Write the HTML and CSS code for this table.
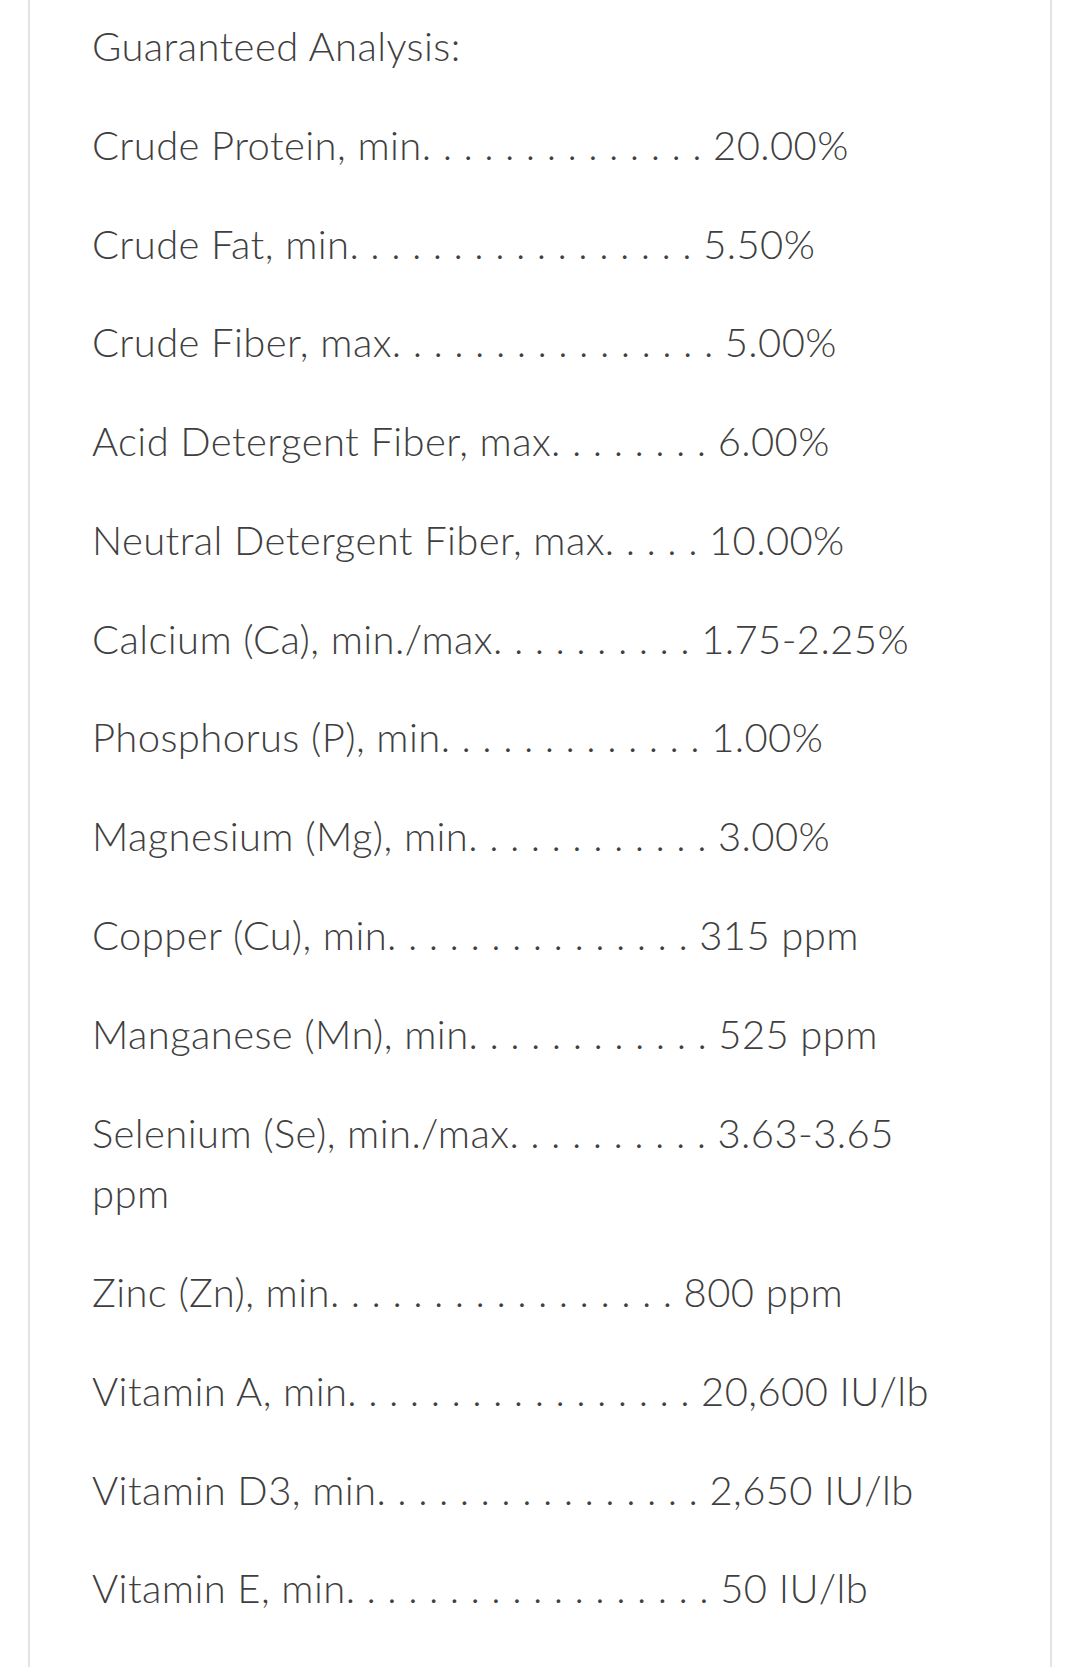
FILE: index.html
```html
<!DOCTYPE html>
<html lang="en">
<head>
<meta charset="utf-8">
<title>Guaranteed Analysis</title>
<link rel="stylesheet" href="styles.css">
</head>
<body>
<main class="card">
  <h1 class="row">Guaranteed Analysis:</h1>
  <p class="row"><span class="label">Crude Protein, min.</span><span class="dots"> . . . . . . . . . . . . . </span><span class="value">20.00%</span></p>
  <p class="row"><span class="label">Crude Fat, min.</span><span class="dots"> . . . . . . . . . . . . . . . . </span><span class="value">5.50%</span></p>
  <p class="row"><span class="label">Crude Fiber, max.</span><span class="dots"> . . . . . . . . . . . . . . . </span><span class="value">5.00%</span></p>
  <p class="row"><span class="label">Acid Detergent Fiber, max.</span><span class="dots"> . . . . . . . </span><span class="value">6.00%</span></p>
  <p class="row"><span class="label">Neutral Detergent Fiber, max.</span><span class="dots"> . . . . </span><span class="value">10.00%</span></p>
  <p class="row"><span class="label">Calcium (Ca), min./max.</span><span class="dots"> . . . . . . . . . </span><span class="value">1.75-2.25%</span></p>
  <p class="row"><span class="label">Phosphorus (P), min.</span><span class="dots"> . . . . . . . . . . . . </span><span class="value">1.00%</span></p>
  <p class="row"><span class="label">Magnesium (Mg), min.</span><span class="dots"> . . . . . . . . . . . </span><span class="value">3.00%</span></p>
  <p class="row"><span class="label">Copper (Cu), min.</span><span class="dots"> . . . . . . . . . . . . . . </span><span class="value">315 ppm</span></p>
  <p class="row"><span class="label">Manganese (Mn), min.</span><span class="dots"> . . . . . . . . . . . </span><span class="value">525 ppm</span></p>
  <p class="row"><span class="label">Selenium (Se), min./max.</span><span class="dots"> . . . . . . . . . </span><span class="value">3.63-3.65 ppm</span></p>
  <p class="row"><span class="label">Zinc (Zn), min.</span><span class="dots"> . . . . . . . . . . . . . . . . </span><span class="value">800 ppm</span></p>
  <p class="row"><span class="label">Vitamin A, min.</span><span class="dots"> . . . . . . . . . . . . . . . . </span><span class="value">20,600 IU/lb</span></p>
  <p class="row"><span class="label">Vitamin D3, min.</span><span class="dots"> . . . . . . . . . . . . . . . </span><span class="value">2,650 IU/lb</span></p>
  <p class="row"><span class="label">Vitamin E, min.</span><span class="dots"> . . . . . . . . . . . . . . . . . </span><span class="value">50 IU/lb</span></p>
</main>
</body>
</html>
```

FILE: styles.css
```css
html, body {
  margin: 0;
  padding: 0;
  background: #ffffff;
}

body {
  font-family: "Lato", "Liberation Sans", sans-serif;
  color: #3f3f3f;
}

.card {
  box-sizing: border-box;
  width: 1024px;
  min-height: 1667px;
  margin-left: 28px;
  padding: 16px 95px 0 62px;
  border-left: 2px solid #e4e4e4;
  border-right: 2px solid #e4e4e4;
  background: #ffffff;
}

.row {
  margin: 0 0 38.2px 0;
  font-size: 40px;
  font-weight: 300;
  line-height: 60.6px;
  letter-spacing: 0.4px;
}

.dots {
  letter-spacing: 0.3px;
}
```
